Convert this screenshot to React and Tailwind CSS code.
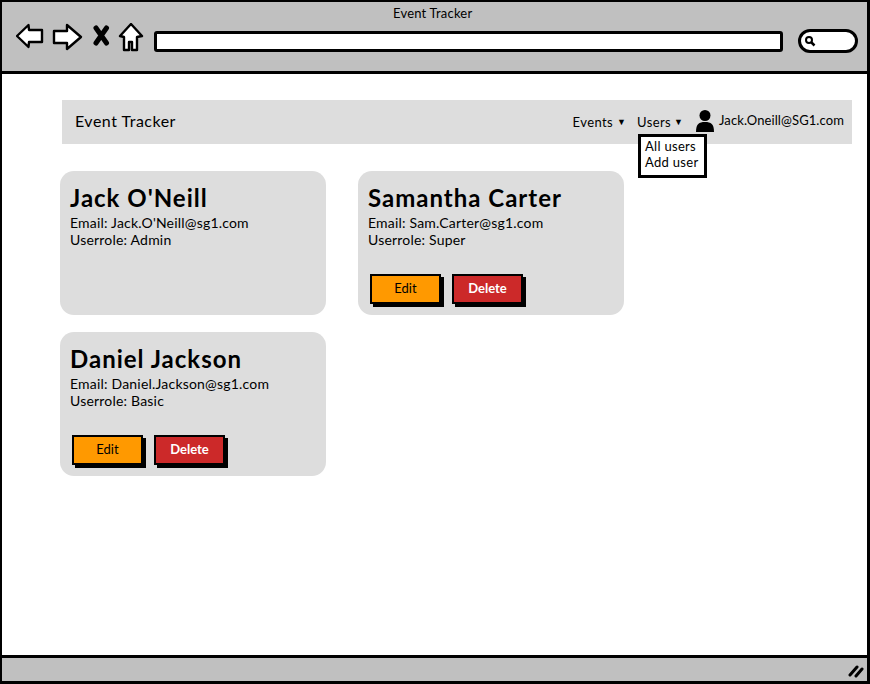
const font = { fontFamily: "Lato, 'Noto Sans', sans-serif" };

const users = [
  { name: "Jack O'Neill", email: "Jack.O'Neill@sg1.com", role: "Admin", canEdit: false },
  { name: "Samantha Carter", email: "Sam.Carter@sg1.com", role: "Super", canEdit: true },
  { name: "Daniel Jackson", email: "Daniel.Jackson@sg1.com", role: "Basic", canEdit: true },
];

function ToolbarIcons() {
  return (
    <svg width="128" height="30" viewBox="0 0 128 30" className="shrink-0" fill="white" stroke="black" strokeWidth="2.4" strokeLinejoin="round">
      <path d="M1 13 L12.5 2 L13 7 L26 7 L26 19 L13 19 L12.5 24 Z" />
      <path d="M38 8 L51 8 L51 2 L65 14 L51 26 L51 20 L38 20 Z" />
      <path d="M80 5 L90.5 20 M90.5 5 L80 20" strokeWidth="5" fill="none" strokeLinecap="round" />
      <path d="M115 1 L126 13 L121 14 L121 27 L116 27 L116 19 L113 19 L113 27 L108 27 L108 14 L104 13 Z" />
    </svg>
  );
}

function Card({ user }) {
  return (
    <div className="h-[144px] rounded-[14px] bg-[#dddddd] pl-[10px] pt-[12px]">
      <h2 className="text-[24px] leading-[30px] font-bold tracking-[1px] text-black">{user.name}</h2>
      <p className="mt-[1px] text-[14px] leading-[17px] tracking-[0.2px] text-black">Email: {user.email}</p>
      <p className="text-[14px] leading-[17px] tracking-[0.2px] text-black">Userrole: {user.role}</p>
      {user.canEdit ? (
        <div className="mt-[26px] ml-[2px] flex gap-[11px]">
          <button type="button" className="h-[30px] w-[71px] border-2 border-black bg-[#ff9900] text-[13px] text-black shadow-[3px_3px_0_#000]">
            Edit
          </button>
          <button type="button" className="h-[30px] w-[71px] border-2 border-black bg-[#cc2929] text-[13px] font-bold text-white shadow-[3px_3px_0_#000]">
            Delete
          </button>
        </div>
      ) : null}
    </div>
  );
}

export default function App() {
  return (
    <div style={font} className="flex h-[684px] w-[870px] flex-col overflow-hidden border-2 border-r-[3px] border-b-[3px] border-black bg-white">
      <div className="relative h-[72px] shrink-0 border-b-[3px] border-black bg-[#c0c0c0] pl-[14px]">
        <p className="absolute top-[3px] left-[391px] text-[13px] leading-[17px] tracking-[0.2px] text-black">Event Tracker</p>
        <div className="flex items-start pt-[21px]">
          <ToolbarIcons />
          <div className="mt-[8px] ml-[10px] h-[21px] w-[629px] rounded-[3px] border-[3px] border-black bg-white" />
          <div className="mt-[6px] ml-[15px] flex h-[24px] w-[60px] items-center rounded-[12px] border-[3px] border-black bg-white pl-[3px]">
            <svg width="12" height="12" viewBox="0 0 12 12" fill="none" stroke="black">
              <circle cx="5" cy="5" r="3" strokeWidth="2" />
              <path d="M7.5 7.5 L10.5 10.5" strokeWidth="2.5" />
            </svg>
          </div>
        </div>
      </div>

      <div className="flex-1 pl-[60px] pt-[26px]">
        <nav className="relative flex h-[44px] w-[790px] items-center justify-between bg-[#dddddd] pr-[8px] pl-[13px]">
          <span className="mb-[2px] text-[16px] tracking-[0.5px] text-black">Event Tracker</span>
          <div className="flex items-center text-[13px] text-black">
            <span className="mt-[1px] tracking-[0.4px]">Events</span>
            <span className="ml-[4px] text-[9px]">▼</span>
            <span className="mt-[1px] ml-[11px] tracking-[0.4px]">Users</span>
            <span className="ml-[3px] text-[9px]">▼</span>
            <svg width="18" height="22" viewBox="0 0 18 22" fill="black" className="ml-[13px] mb-[3px]">
              <circle cx="9" cy="5.5" r="5.5" />
              <path d="M0 22 C0 14 3 12 9 12 C15 12 18 14 18 22 Z" />
            </svg>
            <span className="ml-[5px] mb-[3px] tracking-[0.1px]">Jack.Oneill@SG1.com</span>
          </div>
          <div className="absolute top-[34px] left-[576px] h-[44px] w-[69px] border-[3px] border-black bg-white pl-[4px] pt-[1px] text-[13px] leading-[16px] tracking-[0.3px] text-black">
            <p>All users</p>
            <p>Add user</p>
          </div>
        </nav>

        <div className="mt-[27px] -ml-[2px] grid w-[564px] grid-cols-[266px_266px] gap-x-[32px] gap-y-[17px]">
          {users.map((user) => (
            <Card key={user.name} user={user} />
          ))}
        </div>
      </div>

      <div className="relative h-[26px] shrink-0 border-t-[3px] border-black bg-[#c0c0c0]">
        <svg width="16" height="14" viewBox="0 0 16 14" className="absolute top-[6px] right-[3px]" stroke="black" strokeWidth="3" strokeLinecap="round">
          <path d="M2 11 L9 3 M8 12 L14 5" />
        </svg>
      </div>
    </div>
  );
}
